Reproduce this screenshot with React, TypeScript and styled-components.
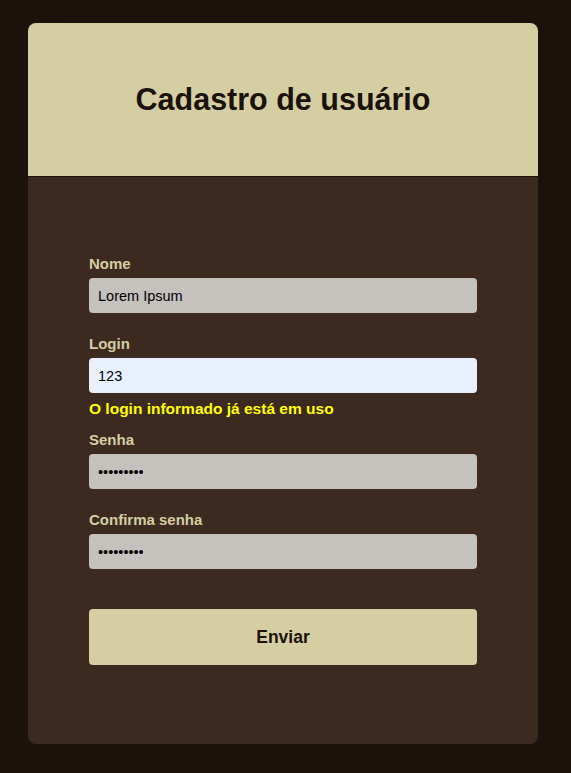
import React from "react";
import styled, { createGlobalStyle } from "styled-components";

const Global = createGlobalStyle`
  html, body { margin: 0; padding: 0; }
  body {
    background: #1a120b;
    font-family: "Liberation Sans", Arial, sans-serif;
    min-height: 773px;
  }
  * { box-sizing: border-box; }
`;

const Page = styled.div`
  padding: 23px 33px 29px 28px;
`;

const Card = styled.div`
  width: 510px;
  border-radius: 8px;
  overflow: hidden;
  background: #3c2a21;
`;

const Header = styled.header`
  height: 154px;
  background: #d5cea3;
  border-bottom: 1px solid #1a120b;
  display: flex;
  align-items: center;
  justify-content: center;
`;

const Title = styled.h1`
  margin: 0;
  font-size: 30.5px;
  font-weight: 700;
  color: #1a120b;
`;

const Form = styled.form`
  padding: 78px 61px 79px;
  display: flex;
  flex-direction: column;
`;

const Field = styled.div<{ $gap: number }>`
  display: flex;
  flex-direction: column;
  margin-bottom: ${(p) => p.$gap}px;
`;

const Label = styled.label`
  font-size: 15px;
  font-weight: 700;
  color: #d5cea3;
  line-height: 17px;
  margin-bottom: 6px;
`;

const Input = styled.input<{ $focused?: boolean }>`
  height: 35px;
  border: none;
  border-radius: 4px;
  padding: 0 9px;
  font-family: "Liberation Sans", Arial, sans-serif;
  font-size: 14.5px;
  color: #000;
  background: ${(p) => (p.$focused ? "#e8f0fe" : "#c5c1bd")};
  outline: none;
`;

const Error = styled.span`
  margin-top: 7px;
  font-size: 15.5px;
  font-weight: 700;
  color: #ffff00;
  line-height: 17px;
`;

const Button = styled.button`
  margin-top: 18px;
  height: 56px;
  border: none;
  border-radius: 4px;
  background: #d5cea3;
  color: #1a120b;
  font-family: "Liberation Sans", Arial, sans-serif;
  font-size: 17.5px;
  font-weight: 700;
`;

export default function App() {
  return (
    <>
      <Global />
      <Page>
        <Card>
          <Header>
            <Title>Cadastro de usuário</Title>
          </Header>
          <Form onSubmit={(e) => e.preventDefault()}>
            <Field $gap={22}>
              <Label>Nome</Label>
              <Input defaultValue="Lorem Ipsum" />
            </Field>
            <Field $gap={14}>
              <Label>Login</Label>
              <Input $focused defaultValue="123" />
              <Error>O login informado já está em uso</Error>
            </Field>
            <Field $gap={22}>
              <Label>Senha</Label>
              <Input type="password" defaultValue="123456789" />
            </Field>
            <Field $gap={22}>
              <Label>Confirma senha</Label>
              <Input type="password" defaultValue="123456789" />
            </Field>
            <Button type="submit">Enviar</Button>
          </Form>
        </Card>
      </Page>
    </>
  );
}
